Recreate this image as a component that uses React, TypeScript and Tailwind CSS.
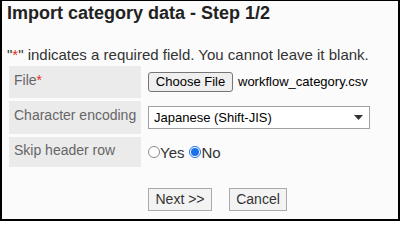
import React from "react";

export default function App() {
  const font = { fontFamily: '"Liberation Sans", Arial, sans-serif' };
  return (
    <div
      style={font}
      className="w-[400px] h-[221px] bg-[#fbfbfb] border-black border-t border-l-2 border-r-2 border-b-2 pl-[5px] pt-[2px] box-border overflow-hidden text-[#333]"
    >
      <h1 className="text-[18px] leading-[21px] font-bold text-[#222]">
        Import category data - Step 1/2
      </h1>
      <p className="mt-[22px] text-[15px] leading-[17px] text-[#333]">
        "<span className="text-[#e0302a]">*</span>" indicates a required field. You cannot leave it blank.
      </p>
      <div className="mt-[3px] ml-[2px] flex flex-col gap-[3px]">
        <div className="flex gap-[3px] h-[32px]">
          <div className="w-[132px] bg-[#ebebeb] pl-[5px] pt-[6px] text-[14px] leading-[16px] text-[#666]">
            File<span className="text-[#e0302a]">*</span>
          </div>
          <div className="flex items-center pl-[4px]">
            <span className="h-[20px] w-[85px] flex items-center justify-center bg-[#efefef] border border-[#767676] rounded-[3px] text-[13px] text-black">
              Choose File
            </span>
            <span className="ml-[5px] text-[13px] text-black">workflow_category.csv</span>
          </div>
        </div>
        <div className="flex gap-[3px] h-[33px]">
          <div className="w-[132px] bg-[#ebebeb] pl-[5px] pt-[6px] text-[14px] leading-[16px] text-[#666]">
            Character encoding
          </div>
          <div className="flex items-center pl-[4px]">
            <div className="w-[222px] h-[23px] bg-white border border-[#a0a0a0] flex items-center justify-between pl-[5px] pr-[6px] text-[13px] text-black">
              <span>Japanese (Shift-JIS)</span>
              <svg width="9" height="5" viewBox="0 0 9 5">
                <path d="M0 0 H9 L4.5 5 Z" fill="#333" />
              </svg>
            </div>
          </div>
        </div>
        <div className="flex gap-[3px] h-[30px]">
          <div className="w-[132px] bg-[#ebebeb] pl-[5px] pt-[5px] text-[14px] leading-[16px] text-[#666]">
            Skip header row
          </div>
          <div className="flex items-center pl-[4px] text-[15px] leading-[17px] text-[#333]">
            <span className="w-[12px] h-[12px] rounded-full border border-[#8a8a8a] bg-white" />
            <span>Yes</span>
            <span className="ml-[5px] w-[12px] h-[12px] rounded-full border border-[#1a73e8] bg-white flex items-center justify-center">
              <span className="w-[8px] h-[8px] rounded-full bg-[#1a73e8]" />
            </span>
            <span>No</span>
          </div>
        </div>
      </div>
      <div className="mt-[21px] ml-[141px] flex gap-[17px]">
        <span className="w-[64px] h-[23px] flex items-center justify-center bg-[#f3f3f3] border border-[#aaa] text-[14px] text-[#333]">
          Next &gt;&gt;
        </span>
        <span className="w-[58px] h-[23px] flex items-center justify-center bg-[#f3f3f3] border border-[#aaa] text-[14px] text-[#333]">
          Cancel
        </span>
      </div>
    </div>
  );
}
